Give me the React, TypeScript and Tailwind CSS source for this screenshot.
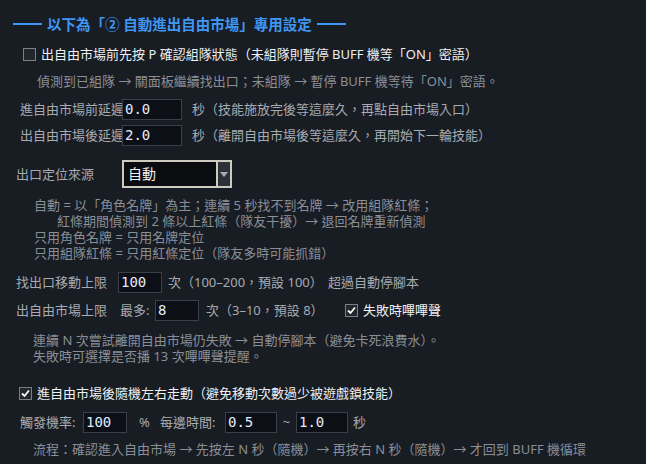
import React from 'react';

// 數字輸入框
const NumBox = ({ value, w }: { value: string; w: string }) => (
  <input
    type="text"
    defaultValue={value}
    className={`relative z-10 h-[21px] ${w} border border-[#3a3f48] bg-[#0c0f15] pl-[2px] font-['DejaVu_Sans_Mono',monospace] text-[14px] text-[#e2ecff] outline-none`}
  />
);

const Check = ({ checked }: { checked?: boolean }) => (
  <span className="flex h-[13px] w-[13px] shrink-0 items-center justify-center border border-[#7c7f85] bg-[#23262c]">
    {checked && (
      <svg width="11" height="11" viewBox="0 0 11 11">
        <polyline points="2,5.5 4.5,8 9,2.5" fill="none" stroke="#ffffff" strokeWidth="1.8" />
      </svg>
    )}
  </span>
);

export default function App() {
  return (
    <div className="min-h-screen w-full bg-[#181c23] pt-3 font-['Noto_Sans','Noto_Sans_CJK_TC',sans-serif] text-[13px] leading-none text-[#a7abb2]">
      {/* 標題 */}
      <div className="flex h-6 items-center pl-[13px]">
        <div className="h-[2px] w-[29px] bg-[#3f97f5]" />
        <span className="px-[5px] text-[14.5px] font-bold text-[#3f97f5]">以下為「② 自動進出自由市場」專用設定</span>
        <div className="h-[2px] w-[29px] bg-[#3f97f5]" />
      </div>

      {/* 確認組隊 */}
      <div className="mt-[7px] flex h-[22px] items-center pl-[23px]">
        <Check />
        <span className="ml-[5px] whitespace-nowrap text-[#eef0f3]">
          出自由市場前先按 P 確認組隊狀態（未組隊則暫停 BUFF 機等「ON」密語）
        </span>
      </div>
      <div className="mt-[6px] flex h-5 items-center pl-[37px] text-[#8a8f97]">
        偵測到已組隊 → 關面板繼續找出口；未組隊 → 暫停 BUFF 機等待「ON」密語。
      </div>

      {/* 延遲 */}
      <div className="mt-[7px] flex h-[22px] items-center pl-5">
        <span className="w-[102px] whitespace-nowrap">進自由市場前延遲</span>
        <NumBox value="0.0" w="w-[60px]" />
        <span className="ml-[10px] whitespace-nowrap">秒（技能施放完後等這麼久，再點自由市場入口）</span>
      </div>
      <div className="mt-[4px] flex h-[22px] items-center pl-5">
        <span className="w-[102px] whitespace-nowrap">出自由市場後延遲</span>
        <NumBox value="2.0" w="w-[60px]" />
        <span className="ml-[10px] whitespace-nowrap">秒（離開自由市場後等這麼久，再開始下一輪技能）</span>
      </div>

      {/* 出口定位來源 */}
      <div className="mt-[14px] flex h-[28px] items-center pl-4">
        <span className="w-[106px] whitespace-nowrap">出口定位來源</span>
        <div className="flex h-[28px] w-[110px]">
          <div className="flex flex-1 items-center border-2 border-[#cfcac0] bg-[#0a0c10] pl-[4px] text-[14px] text-[#f2f2f2]">
            自動
          </div>
          <div className="flex w-[14px] items-center justify-center border-y-2 border-r-2 border-[#cfcac0] bg-[#2c3138]">
            <svg width="8" height="5" viewBox="0 0 8 5">
              <polygon points="0,0 8,0 4,5" fill="#a9adb3" />
            </svg>
          </div>
        </div>
      </div>
      <div className="mt-[9px] flex flex-col pl-[34px] text-[#8a8f97] leading-4">
        <div className="h-4 whitespace-nowrap">自動 = 以「角色名牌」為主；連續 5 秒找不到名牌 → 改用組隊紅條；</div>
        <div className="h-4 whitespace-nowrap pl-[23px]">紅條期間偵測到 2 條以上紅條（隊友干擾）→ 退回名牌重新偵測</div>
        <div className="h-4 whitespace-nowrap">只用角色名牌 = 只用名牌定位</div>
        <div className="h-4 whitespace-nowrap">只用組隊紅條 = 只用紅條定位（隊友多時可能抓錯）</div>
      </div>

      {/* 上限 */}
      <div className="mt-[10px] flex h-[22px] items-center pl-4">
        <span className="w-[102px] whitespace-nowrap">找出口移動上限</span>
        <NumBox value="100" w="w-[44px]" />
        <span className="ml-[6px] w-[160px] whitespace-nowrap">次（100–200，預設 100）</span>
        <span className="whitespace-nowrap">超過自動停腳本</span>
      </div>
      <div className="mt-[6px] flex h-[22px] items-center pl-4">
        <span className="w-[104px] whitespace-nowrap">出自由市場上限</span>
        <span className="w-[35px] whitespace-nowrap">最多:</span>
        <NumBox value="8" w="w-[44px]" />
        <span className="ml-[7px] w-[139px] whitespace-nowrap">次（3–10，預設 8）</span>
        <Check checked />
        <span className="ml-[5px] whitespace-nowrap text-[#eef0f3]">失敗時嗶嗶聲</span>
      </div>
      <div className="mt-[11px] flex flex-col pl-[33px] text-[#8a8f97] leading-4">
        <div className="h-4 whitespace-nowrap">連續 N 次嘗試離開自由市場仍失敗 → 自動停腳本（避免卡死浪費水）。</div>
        <div className="h-4 whitespace-nowrap">失敗時可選擇是否播 13 次嗶嗶聲提醒。</div>
      </div>

      {/* 隨機走動 */}
      <div className="mt-[19px] flex h-5 items-center pl-[19px]">
        <Check checked />
        <span className="ml-[5px] whitespace-nowrap text-[#eef0f3]">
          進自由市場後隨機左右走動（避免移動次數過少被遊戲鎖技能）
        </span>
      </div>
      <div className="mt-[8px] flex h-[22px] items-center pl-5">
        <span className="w-[63px] whitespace-nowrap">觸發機率:</span>
        <NumBox value="100" w="w-[44px]" />
        <span className="ml-[12px] w-[21px]">%</span>
        <span className="w-[65px] whitespace-nowrap">每邊時間:</span>
        <NumBox value="0.5" w="w-[52px]" />
        <span className="w-[19px] text-center">~</span>
        <NumBox value="1.0" w="w-[52px]" />
        <span className="ml-[5px]">秒</span>
      </div>
      <div className="mt-[8px] flex h-4 items-center whitespace-nowrap pl-[33px] text-[#8a8f97]">
        流程：確認進入自由市場 → 先按左 N 秒（隨機）→ 再按右 N 秒（隨機）→ 才回到 BUFF 機循環
      </div>
    </div>
  );
}
